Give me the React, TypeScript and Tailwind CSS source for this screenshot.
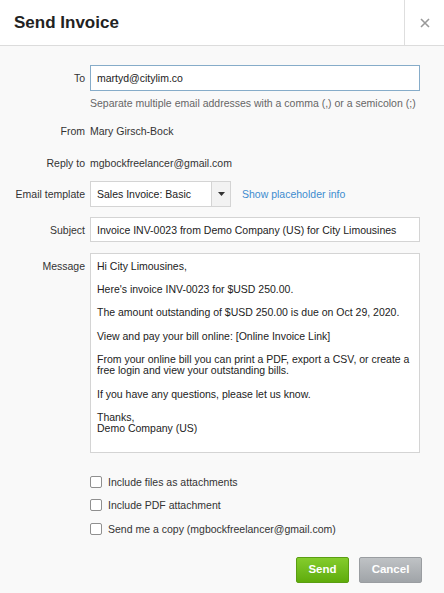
import { useState } from "react";

const font = { fontFamily: '"Liberation Sans", Arial, sans-serif' };

const message = `Hi City Limousines,

Here's invoice INV-0023 for $USD 250.00.

The amount outstanding of $USD 250.00 is due on Oct 29, 2020.

View and pay your bill online: [Online Invoice Link]

From your online bill you can print a PDF, export a CSV, or create a
free login and view your outstanding bills.

If you have any questions, please let us know.

Thanks,
Demo Company (US)`;

function Label({ children, className = "" }: { children: React.ReactNode; className?: string }) {
  return <div className={`text-right text-[10.5px] leading-[12px] text-[#333] ${className}`}>{children}</div>;
}

function Check({ label }: { label: string }) {
  const [on, setOn] = useState(false);
  return (
    <label className="flex h-[23.5px] items-center gap-[6px] text-[10.5px] leading-[12px] text-[#333]">
      <input
        type="checkbox"
        checked={on}
        onChange={() => setOn(!on)}
        className="h-[12px] w-[12px] appearance-none rounded-[2px] border border-[#8f8f8f] bg-white checked:bg-[#5b9dd9]"
      />
      {label}
    </label>
  );
}

export default function App() {
  return (
    <div className="h-[593px] w-[444px] overflow-hidden bg-[#f9f9f9]" style={font}>
      {/* Header */}
      <div className="flex h-[46px] items-stretch border-b border-[#dcdcdc] bg-white">
        <h1 className="flex flex-1 items-center pl-[14px] text-[17px] font-bold text-[#222]">Send Invoice</h1>
        <button type="button" className="flex w-[40px] items-center justify-center border-l border-[#dedede] text-[#999]">
          <svg width="10" height="10" viewBox="0 0 10 10">
            <path d="M1 1L9 9M9 1L1 9" stroke="currentColor" strokeWidth="1.6" />
          </svg>
        </button>
      </div>

      {/* Body */}
      <div className="grid grid-cols-[85px_330px] gap-x-[5px] pt-[19px] text-[10.5px] leading-[12px]">
        <Label className="flex h-[26px] items-center justify-end">To</Label>
        <input
          defaultValue="martyd@citylim.co"
          className="h-[26px] border border-[#86acc9] bg-white px-[6px] text-[10.5px] text-[#222] outline-none"
        />
        <div />
        <div className="mt-[6px] text-[#666]">Separate multiple email addresses with a comma (,) or a semicolon (;)</div>

        <Label className="mt-[16px]">From</Label>
        <div className="mt-[16px] text-[#333]">Mary Girsch-Bock</div>

        <Label className="mt-[20px]">Reply to</Label>
        <div className="mt-[20px] text-[#333]">mgbockfreelancer@gmail.com</div>

        <Label className="mt-[12px] flex h-[26px] items-center justify-end">Email template</Label>
        <div className="mt-[12px] flex items-center gap-[11px]">
          <div className="flex h-[26px] w-[141px] border border-[#d4d4d4] bg-white">
            <span className="flex flex-1 items-center px-[6px] text-[#222]">Sales Invoice: Basic</span>
            <span className="flex w-[19px] items-center justify-center border-l border-[#d4d4d4] bg-[#f2f2f2]">
              <svg width="7" height="4" viewBox="0 0 7 4">
                <path d="M0 0H7L3.5 4Z" fill="#333" />
              </svg>
            </span>
          </div>
          <span className="text-[#3d8ccf]">Show placeholder info</span>
        </div>

        <Label className="mt-[10px] flex h-[25px] items-center justify-end">Subject</Label>
        <input
          defaultValue="Invoice INV-0023 from Demo Company (US) for City Limousines"
          className="mt-[10px] h-[25px] border border-[#d4d4d4] bg-white px-[6px] text-[10.5px] text-[#222] outline-none"
        />

        <Label className="mt-[11px] pt-[7px]">Message</Label>
        <textarea
          defaultValue={message}
          className="mt-[11px] h-[200px] resize-none border border-[#d4d4d4] bg-white px-[6px] pt-[7px] text-[10.5px] leading-[11.6px] text-[#222] outline-none"
        />

        <div />
        <div className="mt-[17px] flex flex-col">
          <Check label="Include files as attachments" />
          <Check label="Include PDF attachment" />
          <Check label="Send me a copy (mgbockfreelancer@gmail.com)" />
        </div>
      </div>

      {/* Footer */}
      <div className="mt-[16px] flex justify-end gap-[10px] pr-[22px]">
        <button
          type="button"
          className="h-[26px] w-[53px] rounded-[2px] border border-[#5a9e12] bg-gradient-to-b from-[#84cc2c] to-[#5fac0a] text-[11.5px] font-bold text-white"
        >
          Send
        </button>
        <button
          type="button"
          className="h-[26px] w-[63px] rounded-[2px] border border-[#9a9da1] bg-gradient-to-b from-[#bfc2c5] to-[#a0a4a8] text-[11.5px] font-bold text-white"
        >
          Cancel
        </button>
      </div>
    </div>
  );
}
